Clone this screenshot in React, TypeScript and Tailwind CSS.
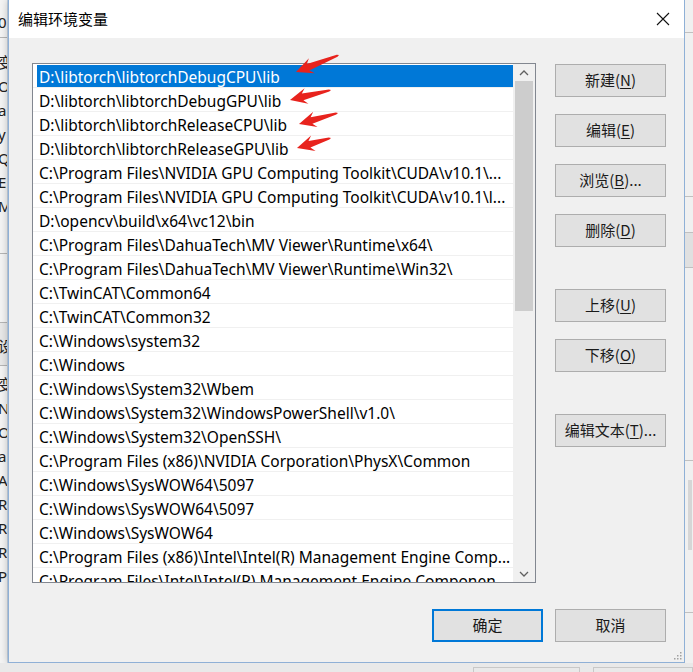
import React from "react";

const paths = [
  "D:\\libtorch\\libtorchDebugCPU\\lib",
  "D:\\libtorch\\libtorchDebugGPU\\lib",
  "D:\\libtorch\\libtorchReleaseCPU\\lib",
  "D:\\libtorch\\libtorchReleaseGPU\\lib",
  "C:\\Program Files\\NVIDIA GPU Computing Toolkit\\CUDA\\v10.1\\...",
  "C:\\Program Files\\NVIDIA GPU Computing Toolkit\\CUDA\\v10.1\\l...",
  "D:\\opencv\\build\\x64\\vc12\\bin",
  "C:\\Program Files\\DahuaTech\\MV Viewer\\Runtime\\x64\\",
  "C:\\Program Files\\DahuaTech\\MV Viewer\\Runtime\\Win32\\",
  "C:\\TwinCAT\\Common64",
  "C:\\TwinCAT\\Common32",
  "C:\\Windows\\system32",
  "C:\\Windows",
  "C:\\Windows\\System32\\Wbem",
  "C:\\Windows\\System32\\WindowsPowerShell\\v1.0\\",
  "C:\\Windows\\System32\\OpenSSH\\",
  "C:\\Program Files (x86)\\NVIDIA Corporation\\PhysX\\Common",
  "C:\\Windows\\SysWOW64\\5097",
  "C:\\Windows\\SysWOW64\\5097",
  "C:\\Windows\\SysWOW64",
  "C:\\Program Files (x86)\\Intel\\Intel(R) Management Engine Comp...",
  "C:\\Program Files\\Intel\\Intel(R) Management Engine Componen",
];

// red annotation arrows, page coords: tip -> tail
const arrows = [
  [296, 72, 339, 55],
  [290, 100, 331, 90],
  [299, 124, 338, 113],
  [297, 148, 331, 138],
];

const arrowPoints = (tx: number, ty: number, ex: number, ey: number) => {
  const len = Math.hypot(ex - tx, ey - ty);
  const ux = (ex - tx) / len;
  const uy = (ey - ty) / len;
  const nx = -uy;
  const ny = ux;
  const p = (a: number, b: number) =>
    `${(tx + ux * a + nx * b).toFixed(1)},${(ty + uy * a + ny * b).toFixed(1)}`;
  return [
    p(0, 0),
    p(17, -8),
    p(13, -3.4),
    p(len - 2, -1),
    p(len, 0),
    p(len - 2, 1),
    p(13, 3.4),
    p(17, 8),
  ].join(" ");
};

const leftLetters = [
  { y: 12, t: "0." },
  { y: 52, t: "变" },
  { y: 76, t: "Or" },
  { y: 100, t: "a" },
  { y: 124, t: "y" },
  { y: 148, t: "Qt" },
  { y: 172, t: "E" },
  { y: 196, t: "M" },
  { y: 336, t: "设" },
  { y: 374, t: "变" },
  { y: 398, t: "N" },
  { y: 422, t: "OS" },
  { y: 446, t: "a" },
  { y: 470, t: "A" },
  { y: 494, t: "R" },
  { y: 518, t: "R" },
  { y: 542, t: "R" },
  { y: 566, t: "P" },
];

const Btn = ({
  label,
  u,
  after,
  primary,
  className = "",
}: {
  label: string;
  u?: string;
  after?: string;
  primary?: boolean;
  className?: string;
}) => (
  <div
    className={`${
      primary ? "border-2 border-[#0078d7]" : "border border-[#adadad]"
    } bg-[#e1e1e1] h-[33px] w-[111px] flex items-center justify-center text-[15px] text-[#1a1a1a] ${className}`}
  >
    {label}
    {u && (
      <>
        (<span className="underline underline-offset-2">{u}</span>)
      </>
    )}
    {after}
  </div>
);

const Chevron = ({ up }: { up?: boolean }) => (
  <svg width="10" height="6" viewBox="0 0 10 6">
    <path
      d={up ? "M1 5 L5 1 L9 5" : "M1 1 L5 5 L9 1"}
      stroke="#606060"
      strokeWidth="1.3"
      fill="none"
    />
  </svg>
);

export default function App() {
  return (
    <div
      className="w-[693px] h-[672px] bg-[#e6e6e6] flex flex-col overflow-hidden relative"
      style={{ fontFamily: '"Noto Sans", "Noto Sans CJK SC", sans-serif' }}
    >
      <div className="flex h-[663px]">
        {/* background window, left edge */}
        <div className="w-[8px] bg-[#f4f4f4] relative overflow-hidden border-r border-[#c9d6e4]">
          <div className="absolute left-0 right-0 top-[37px] border-t border-[#b5b5b5]" />
          <div className="absolute left-0 right-0 top-[253px] border-t border-[#b5b5b5]" />
          <div className="absolute left-0 right-0 top-[322px] h-[44px] bg-[#e8e8e8] border-y border-[#b5b5b5]" />
          {leftLetters.map((l) => (
            <div
              key={l.y}
              className="absolute left-[-2px] text-[15px] leading-[20px] text-[#222]"
              style={{ top: l.y }}
            >
              {l.t}
            </div>
          ))}
        </div>

        {/* dialog */}
        <div className="w-[677px] bg-[#f0f0f0] border-l border-r border-b border-[#8fb0d6] flex flex-col relative shadow-[0_0_8px_rgba(0,0,0,0.25)]">
          <div className="h-[38px] bg-white flex items-center justify-between pl-[9px] pr-[14px]">
            <span className="text-[15px] text-black" style={{ fontFamily: '"Noto Sans CJK SC", sans-serif' }}>
              编辑环境变量
            </span>
            <svg width="14" height="14" viewBox="0 0 14 14" className="mb-[1px]">
              <path d="M1 1 L13 13 M13 1 L1 13" stroke="#111" strokeWidth="1.1" />
            </svg>
          </div>

          <div className="flex pt-[25px] pl-[23px]">
            <div className="w-[504px] h-[520px] border border-[#828790] bg-white flex overflow-hidden">
              <div className="flex-1 flex flex-col overflow-hidden">
                {paths.map((p, i) => (
                  <div
                    key={i}
                    className="h-[24px] shrink-0 border-b border-[#f0f0f0] pl-[4px] flex"
                  >
                    <div
                      className={`${
                        i === 0 ? "bg-[#0078d7] text-white" : "text-black"
                      } flex-1 h-[22px] mt-[1px] pl-[2px] text-[15.5px] leading-[24px] whitespace-nowrap overflow-hidden`}
                    >
                      {p}
                    </div>
                  </div>
                ))}
              </div>
              <div className="w-[22px] bg-[#f0f0f0] flex flex-col">
                <div className="h-[17px] flex items-center justify-center">
                  <Chevron up />
                </div>
                <div className="h-[230px] mx-[2px] bg-[#cdcdcd]" />
                <div className="flex-1" />
                <div className="h-[17px] flex items-center justify-center">
                  <Chevron />
                </div>
              </div>
            </div>

            <div className="flex flex-col ml-[19px] pt-[1px]" style={{ fontFamily: '"Noto Sans CJK SC", sans-serif' }}>
              <Btn label="新建" u="N" />
              <Btn label="编辑" u="E" className="mt-[17px]" />
              <Btn label="浏览" u="B" after="..." className="mt-[17px]" />
              <Btn label="删除" u="D" className="mt-[17px]" />
              <Btn label="上移" u="U" className="mt-[42px]" />
              <Btn label="下移" u="O" className="mt-[17px]" />
              <Btn label="编辑文本" u="T" after="..." className="mt-[42px]" />
            </div>
          </div>

          <div className="flex justify-end gap-[12px] pr-[18px] mt-[26px]" style={{ fontFamily: '"Noto Sans CJK SC", sans-serif' }}>
            <Btn label="确定" primary className="w-[110px]" />
            <Btn label="取消" />
          </div>

          {/* resize grip */}
          <svg width="10" height="10" viewBox="0 0 10 10" className="absolute right-[2px] bottom-[2px]">
            {[
              [8, 2],
              [8, 5],
              [5, 5],
              [8, 8],
              [5, 8],
              [2, 8],
            ].map(([x, y]) => (
              <rect key={`${x}-${y}`} x={x} y={y} width="1.5" height="1.5" fill="#a0a0a0" />
            ))}
          </svg>

          {/* red annotation arrows */}
          <svg width="677" height="200" className="absolute left-[-9px] top-0 pointer-events-none" viewBox="0 0 677 200">
            {arrows.map(([a, b, c, d], i) => (
              <polygon key={i} points={arrowPoints(a, b, c, d)} fill="#e8231d" />
            ))}
          </svg>
        </div>

        {/* background window, right edge */}
        <div className="flex-1 bg-[#f0f0f0] relative">
          <div className="absolute left-0 right-0 top-[32px] border-t border-[#c0c0c0]" />
          <div className="absolute left-0 right-0 top-[196px] border-t border-[#c0c0c0]" />
          <div className="absolute left-0 right-0 top-[232px] h-[36px] bg-[#e0e0e0] border-y border-[#c0c0c0]" />
          <div className="absolute left-0 right-0 top-[460px] border-t border-[#c0c0c0]" />
          <div className="absolute left-[3px] top-[480px] w-[4px] h-[70px] bg-[#d6d6d6]" />
          <div className="absolute left-0 right-0 top-[612px] border-t border-[#c0c0c0]" />
        </div>
      </div>
      <div className="flex-1 bg-[#e9e9e9] relative">
        <div className="absolute left-[473px] top-[4px] w-[107px] h-[10px] border border-[#c8c8c8]" />
        <div className="absolute left-[593px] top-[4px] w-[100px] h-[10px] border border-[#c8c8c8]" />
      </div>
    </div>
  );
}
